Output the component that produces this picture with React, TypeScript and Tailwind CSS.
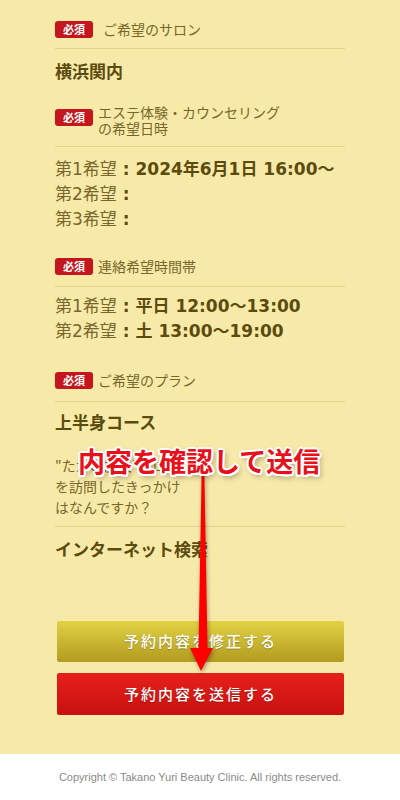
import React from "react";

const JP = "font-['Noto_Sans_CJK_JP','Noto_Sans',sans-serif]";
const VAL = "font-['DejaVu_Sans','Noto_Sans_CJK_JP',sans-serif]";

function Badge() {
  return (
    <span className="inline-flex h-[17px] w-[38px] shrink-0 items-center justify-center rounded-[3px] bg-[#c4161c] text-[11px] font-bold leading-none text-white">
      必須
    </span>
  );
}

function Divider() {
  return <div className="h-px w-full bg-[#e4d38a]" />;
}

function Pref({ n, v }: { n: string; v: string }) {
  return (
    <div>
      第{n}希望<span className="font-bold text-[#5c4a0e]"> : {v}</span>
    </div>
  );
}

export default function App() {
  return (
    <div className={`${JP} relative w-[400px] min-h-[800px] bg-white`}>
      <div className="h-[754px] bg-[#f7eaa9] pl-[55px] pr-[55px] pt-[21px]">
        {/* Salon */}
        <div className="flex items-center pb-[10px]">
          <Badge />
          <span className="ml-[10px] text-[14px] leading-[17px] text-[#77662b]">ご希望のサロン</span>
        </div>
        <Divider />
        <div className="mt-[9px] text-[17px] font-bold leading-[25px] text-[#5c4a0e]">横浜関内</div>

        {/* Date */}
        <div className="mt-[26px] flex items-start pb-[10px]">
          <Badge />
          <span className="ml-[5px] mt-[-5px] text-[14px] leading-[16px] text-[#77662b]">
            エステ体験・カウンセリング
            <br />
            の希望日時
          </span>
        </div>
        <Divider />
        <div className={`${VAL} mt-[10px] text-[17px] leading-[25px] text-[#77662b]`}>
          <Pref n="1" v="2024年6月1日 16:00〜" />
          <Pref n="2" v="" />
          <Pref n="3" v="" />
        </div>

        {/* Contact time */}
        <div className="mt-[26px] flex items-center pb-[11px]">
          <Badge />
          <span className="ml-[5px] text-[14px] leading-[17px] text-[#77662b]">連絡希望時間帯</span>
        </div>
        <Divider />
        <div className={`${VAL} mt-[7px] text-[17px] leading-[25px] text-[#77662b]`}>
          <Pref n="1" v="平日 12:00〜13:00" />
          <Pref n="2" v="土 13:00〜19:00" />
        </div>

        {/* Plan */}
        <div className="mt-[28px] flex items-center pb-[12px]">
          <Badge />
          <span className="ml-[5px] text-[14px] leading-[17px] text-[#77662b]">ご希望のプラン</span>
        </div>
        <Divider />
        <div className="mt-[7px] text-[17px] font-bold leading-[25px] text-[#5c4a0e]">上半身コース</div>

        {/* Question */}
        <div className="mt-[21px] pb-[8px] text-[14px] leading-[21px] text-[#77662b]">
          "たかの友梨"サロン
          <br />
          を訪問したきっかけ
          <br />
          はなんですか？
        </div>
        <Divider />
        <div className="mt-[9px] text-[17px] font-bold leading-[25px] text-[#5c4a0e]">インターネット検索</div>

        {/* Buttons */}
        <div className="mt-[60px] flex flex-col gap-[11px] pl-[2px] pr-[1px]">
          <button className="flex h-[41px] w-full items-center justify-center rounded-[2px] bg-gradient-to-b from-[#e0d244] to-[#b39b1f] text-[15px] font-medium tracking-[2px] text-white [text-shadow:0_1px_1px_rgba(0,0,0,0.25)]">
            予約内容を修正する
          </button>
          <button className="flex h-[42px] w-full items-center justify-center rounded-[2px] bg-gradient-to-b from-[#e6201a] to-[#c91010] text-[15px] font-medium tracking-[2px] text-white [text-shadow:0_1px_1px_rgba(0,0,0,0.25)]">
            予約内容を送信する
          </button>
        </div>
      </div>

      <footer className="flex h-[46px] items-center justify-center bg-white font-['Liberation_Sans',sans-serif] text-[11px] text-[#8a8a8a]">
        Copyright © Takano Yuri Beauty Clinic. All rights reserved.
      </footer>

      {/* Annotation arrow */}
      <svg
        className="pointer-events-none absolute left-[180px] top-[440px] h-[240px] w-[45px] [filter:drop-shadow(1px_2px_2px_rgba(0,0,0,0.35))]"
        viewBox="0 0 45 240"
      >
        <polygon points="22,12 24,12 27.5,208 33,208 21,231 10,208 18.5,208" fill="#ff0000" />
      </svg>

      {/* Annotation text */}
      <div className="pointer-events-none absolute left-[78px] top-[447px] whitespace-nowrap text-[27px] font-bold leading-[27px] text-[#e8101a] [text-shadow:2px_0_0_#fff,-2px_0_0_#fff,0_2px_0_#fff,0_-2px_0_#fff,1.5px_1.5px_0_#fff,-1.5px_-1.5px_0_#fff,1.5px_-1.5px_0_#fff,-1.5px_1.5px_0_#fff,2px_3px_6px_rgba(0,0,0,0.45)]">
        内容を確認して送信
      </div>
    </div>
  );
}
